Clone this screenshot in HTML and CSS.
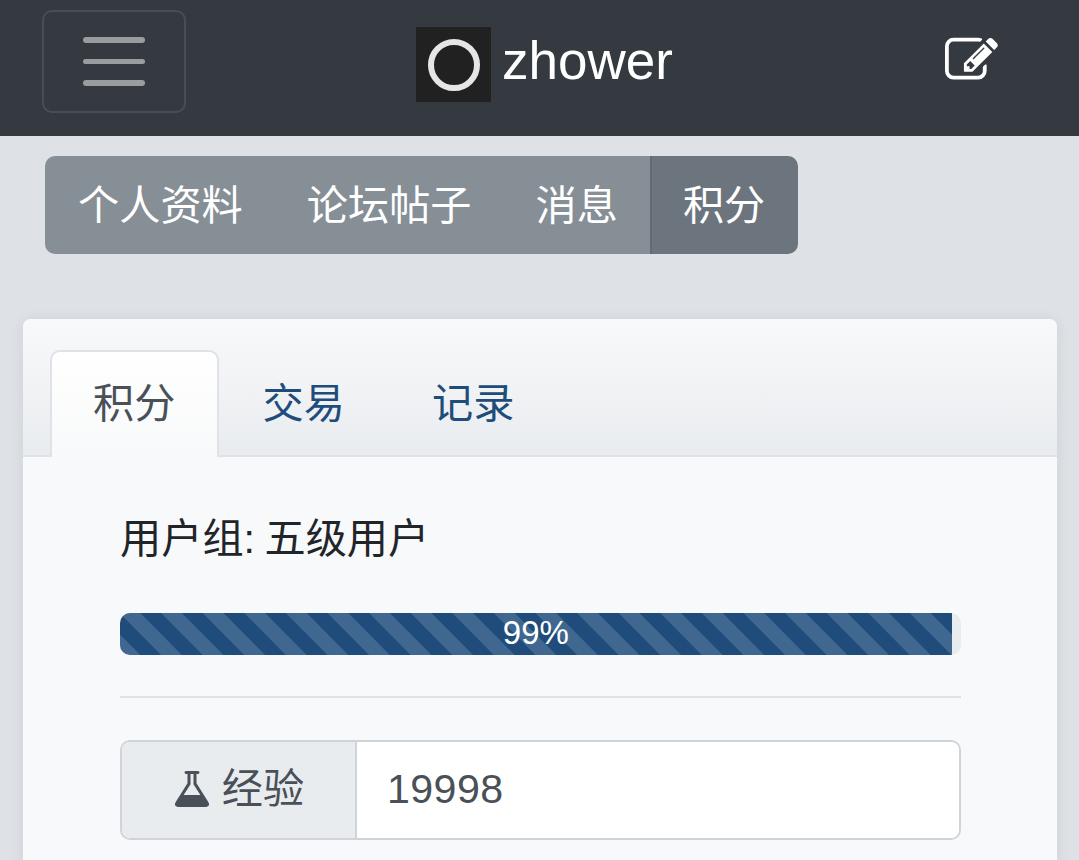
FILE: index.html
```html
<!DOCTYPE html>
<html lang="zh-CN">
<head>
    <meta charset="UTF-8">
    <meta name="viewport" content="width=device-width, initial-scale=1.0">
    <title>积分</title>
    <link rel="stylesheet" href="styles.css">
</head>
<body>

    <nav class="navbar">
        <button class="toggler" type="button" aria-label="menu">
            <span class="toggler-line"></span>
            <span class="toggler-line"></span>
            <span class="toggler-line"></span>
        </button>
        <a class="brand" href="#">
            <span class="logo"><span class="logo-ring"></span></span>
            <span class="brand-name">zhower</span>
        </a>
        <a class="compose" href="#" aria-label="edit">
            <svg class="icon-edit" viewBox="0 0 1792 1792"><path fill="currentColor" d="M888 1184l116-116-152-152-116 116v56h96v96h56zm440-720q-16-16-33 1l-350 350q-17 17-1 33t33-1l350-350q17-17 1-33zm80 594v190q0 119-84.5 203.5t-203.5 84.5h-832q-119 0-203.5-84.5t-84.5-203.5v-832q0-119 84.5-203.5t203.5-84.5h832q63 0 117 25 15 7 18 23 3 17-9 29l-49 49q-14 14-32 8-23-6-45-6h-832q-66 0-113 47t-47 113v832q0 66 47 113t113 47h832q66 0 113-47t47-113v-126q0-13 9-22l64-64q15-15 35-7t20 29zm-96-738l288 288-672 672h-288v-288zm444 132l-92 92-288-288 92-92q28-28 68-28t68 28l152 152q28 28 28 68t-28 68z"/></svg>
        </a>
    </nav>

    <div class="btn-group">
        <a class="btn" href="#">个人资料</a>
        <a class="btn" href="#">论坛帖子</a>
        <a class="btn" href="#">消息</a>
        <a class="btn active" href="#">积分</a>
    </div>

    <div class="card">
        <div class="card-header">
            <ul class="tabs">
                <li class="tab active">积分</li>
                <li class="tab">交易</li>
                <li class="tab">记录</li>
            </ul>
        </div>
        <div class="card-body">
            <p class="user-group">用户组: 五级用户</p>
            <div class="progress">
                <div class="progress-bar" style="width: 98.9%">99%</div>
            </div>
            <hr class="divider">
            <div class="input-group">
                <div class="input-label">
                    <svg class="icon-flask" viewBox="0 0 1792 1792"><path fill="currentColor" d="M1591 1448q56 89 21.5 152.5t-140.5 63.5h-1152q-106 0-140.5-63.5t21.5-152.5l503-793v-399h-64q-26 0-45-19t-19-45 19-45 45-19h512q26 0 45 19t19 45-19 45-45 19h-64v399zm-779-725l-272 429h712l-272-429-20-31v-436h-128v436z"/></svg>
                    经验
                </div>
                <div class="input-value">19998</div>
            </div>
        </div>
    </div>

</body>
</html>
```

FILE: styles.css
```css
html {
    overflow: hidden;
}
body {
    margin: 0;
    font-family: "Liberation Sans", "Noto Sans CJK SC", sans-serif;
    font-size: 41.2px;
    line-height: 1.5;
    background-color: #dee2e6;
    color: #212529;
}
a {
    text-decoration: none;
    color: inherit;
}

/* top bar */
.navbar {
    display: flex;
    align-items: flex-start;
    height: 136px;
    padding: 10px 81px 0 42px;
    box-sizing: border-box;
    background-color: #343a40;
    color: #fff;
}
.toggler {
    display: flex;
    flex-direction: column;
    align-items: center;
    justify-content: center;
    gap: 16px;
    width: 144px;
    height: 103px;
    padding: 0;
    background: none;
    border: 2px solid rgba(255,255,255,0.1);
    border-radius: 10px;
}
.toggler-line {
    display: block;
    width: 62px;
    height: 5.5px;
    border-radius: 3px;
    background-color: rgba(255,255,255,0.5);
}
.brand {
    display: flex;
    align-items: center;
    gap: 11px;
    margin: 17px 0 0 230px;
    height: 75px;
}
.logo {
    display: flex;
    align-items: center;
    justify-content: center;
    width: 75px;
    height: 75px;
    background-color: #212121;
}
.logo-ring {
    width: 52px;
    height: 52px;
    box-sizing: border-box;
    border: 6px solid #e6e6e6;
    border-radius: 50%;
}
.brand-name {
    font-size: 53px;
    line-height: 67px;
    height: 75px;
}
.compose {
    display: flex;
    margin: 23.5px 0 0 auto;
}
.icon-edit {
    display: block;
    width: 53px;
    height: 53px;
}

/* button group */
.btn-group {
    display: inline-flex;
    margin: 20px 0 0 45px;
    border-radius: 10px;
    overflow: hidden;
    vertical-align: top;
}
.btn {
    padding: 0 32px;
    height: 98px;
    line-height: 100px;
    background-color: #868e96;
    color: #fff;
}
.btn:first-child {
    padding-left: 33px;
}
.btn.active {
    padding-left: 31px;
    padding-right: 33px;
    background-color: #6c757d;
    border-left: 2px solid #626b73;
}

/* card */
.card {
    margin: 65px 22px 0 23px;
    background-color: #f8f9fa;
    border-radius: 8px;
    box-shadow: 0 1px 14px rgba(0,0,0,0.08);
}
.card-header {
    height: 138px;
    padding: 31px 0 0 27px;
    box-sizing: border-box;
    background: linear-gradient(#f8f9fa, #e9ecef);
    border-bottom: 2px solid #dfe2e6;
    border-radius: 8px 8px 0 0;
}
.tabs {
    display: flex;
    gap: 1px;
    margin: 0;
    padding: 0;
    list-style: none;
}
.tab {
    width: 168.5px;
    height: 107px;
    box-sizing: border-box;
    border: 2px solid transparent;
    border-bottom: none;
    line-height: 104px;
    text-align: center;
    color: #1f4c7b;
}
.tab.active {
    background: linear-gradient(#fff, #f8f9fa);
    border-color: #dfe2e6;
    border-radius: 10px 10px 0 0;
    color: #495057;
}
.card-body {
    padding: 52px 96px 60px 97px;
}
.user-group {
    margin: 0 0 44px;
    line-height: 60px;
    word-spacing: -2px;
}
.progress {
    display: flex;
    height: 42px;
    background-color: #e9ecef;
    border-radius: 10px;
    overflow: hidden;
}
.progress-bar {
    background-color: #1f4c7b;
    background-image: linear-gradient(45deg, rgba(255,255,255,0.15) 25%, transparent 25%, transparent 50%, rgba(255,255,255,0.15) 50%, rgba(255,255,255,0.15) 75%, transparent 75%, transparent);
    background-size: 41.6px 41.6px;
    color: #fff;
    font-size: 33px;
    line-height: 40px;
    text-align: center;
}
.divider {
    height: 2px;
    margin: 41px 0 42px;
    border: 0;
    background-color: #dfe2e5;
}
.input-group {
    display: flex;
    height: 100px;
    box-sizing: border-box;
    border: 2.5px solid #ced4da;
    border-radius: 10px;
    overflow: hidden;
    color: #495057;
}
.input-label {
    display: flex;
    align-items: center;
    justify-content: center;
    gap: 9px;
    width: 231px;
    padding-right: 2px;
    background-color: #e9ecef;
    border-right: 2.5px solid #ced4da;
}
.icon-flask {
    width: 42px;
    height: 42px;
    margin-bottom: 2px;
}
.input-value {
    flex: 1;
    padding-left: 30px;
    background-color: #fff;
    line-height: 95px;
    letter-spacing: 0.4px;
}
```
